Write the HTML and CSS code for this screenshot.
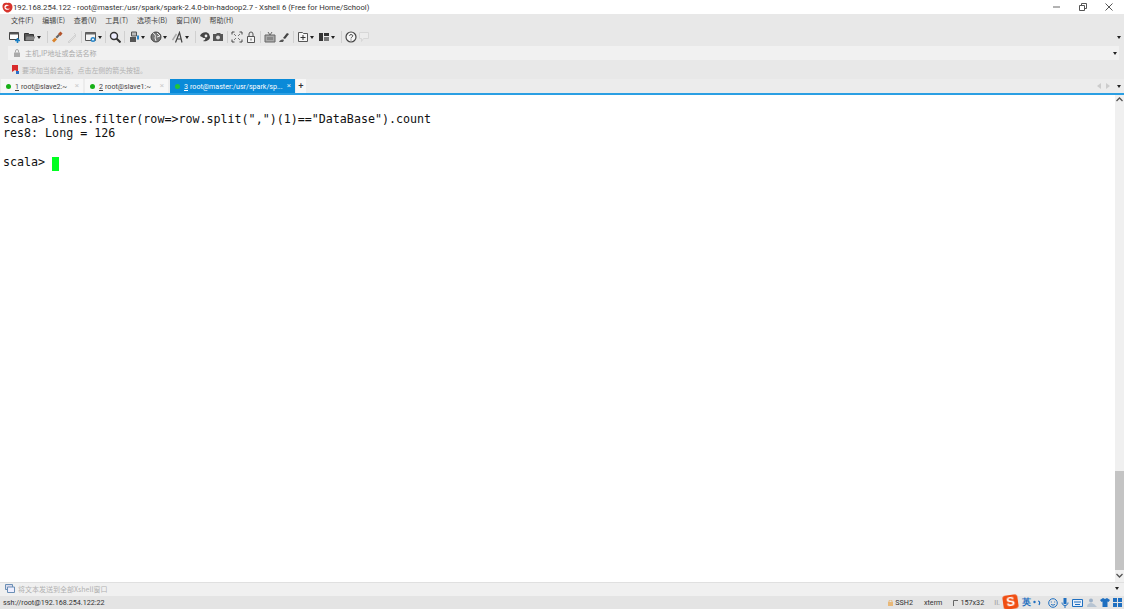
FILE: index.html
```html
<!DOCTYPE html>
<html lang="zh">
<head>
<meta charset="utf-8">
<title>Xshell 6</title>
<link rel="stylesheet" href="styles.css">
</head>
<body>
<div class="app">
  <header class="titlebar">
    <svg class="logo" width="11" height="11" viewBox="0 0 11 11"><path d="M5.500 1C3 0 0 1.500.5 5c.4 3 3 5.500 5 5.500 2.500 0 5-2.500 5-5.500C10.500 2 8 0 5.500 1z" fill="#d8342c"/><path d="M2.500 4c1-1.500 3-1.500 5-.5-1.500 0-3.500.5-4 2 1 1.500 3 1.500 4.500 1-1 1.500-5 2-5.500-.5z" fill="#fff"/></svg>
    <span class="title">192.168.254.122 - root@master:/usr/spark/spark-2.4.0-bin-hadoop2.7 - Xshell 6 (Free for Home/School)</span>
    <div class="winbtns">
      <svg width="8" height="8" viewBox="0 0 8 8"><path d="M0 4h7" stroke="#666" fill="none"/></svg>
      <svg width="8" height="8" viewBox="0 0 8 8"><path d="M.5 2.500h5v5h-5zM2.500 2.500V.5h5v5H5.500" stroke="#555" fill="none"/></svg>
      <svg width="8" height="8" viewBox="0 0 8 8"><path d="M.5.5l7 7M7.500.5l-7 7" stroke="#555" fill="none"/></svg>
    </div>
  </header>
  <nav class="menubar">
    <span>文件(F)</span><span>编辑(E)</span><span>查看(V)</span><span>工具(T)</span><span>选项卡(B)</span><span>窗口(W)</span><span>帮助(H)</span>
  </nav>
  <div class="toolbar">
    <svg class="ic" viewBox="0 0 12 12"><path d="M.5 1.500h9v7h-9z" fill="#fff" stroke="#444"/><path d="M.5 1.500h9v2h-9z" fill="#555"/><path d="M6 9.500h5M8.500 7v5" stroke="#1a7fc4" stroke-width="1.600"/></svg>
    <svg class="ic" viewBox="0 0 12 12"><path d="M.5 2.500h4l1 1h4v6h-9z" fill="#555" stroke="#333"/><path d="M2.500 5.500h9l-2 4h-8z" fill="#888"/></svg>
    <i class="caret"></i>
    <b class="sep wide"></b>
    <svg class="ic" viewBox="0 0 12 12"><path d="M1 9.500l3-3 2 2-3 3z" fill="#d9822b"/><path d="M4.500 6l3-3 1.500 1.500-3 3z" fill="#666"/><path d="M7 3l2.500-2.500 2 2L9.500 5z" fill="#b2532b"/></svg>
    <svg class="ic dim" viewBox="0 0 12 12"><path d="M2 11l7-7 1 1-7 7zM8 2l2 2" stroke="#c9c9c9" fill="#ddd"/></svg>
    <b class="sep"></b>
    <svg class="ic" viewBox="0 0 12 12"><path d="M.5 1.500h10v8h-10z" fill="#f4f4f4" stroke="#555"/><path d="M.5 1.500h10v2h-10z" fill="#666"/><circle cx="8" cy="8.500" r="2.500" fill="#2a86c8"/><circle cx="8" cy="8.500" r="1" fill="#fff"/></svg>
    <i class="caret"></i>
    <b class="sep"></b>
    <svg class="ic" viewBox="0 0 12 12"><circle cx="5" cy="5" r="3.500" fill="#eef" stroke="#333" stroke-width="1.400"/><path d="M7.500 7.500l4 4" stroke="#333" stroke-width="2"/></svg>
    <b class="sep"></b>
    <svg class="ic" viewBox="0 0 12 12"><path d="M3.500 1h5v4h-5z" fill="#bbb" stroke="#555"/><path d="M2 6h6v5H2z" fill="#555"/><path d="M10 4.500v4" stroke="#2a86c8" stroke-width="2"/></svg>
    <i class="caret"></i>
    <svg class="ic m5" viewBox="0 0 12 12"><circle cx="6" cy="6" r="5" fill="#777" stroke="#444"/><path d="M3 2c2 1 3 3 2 5l1 3M7 2l3 3-3 1" stroke="#eee" fill="none"/></svg>
    <i class="caret"></i>
    <svg class="ic m5" viewBox="0 0 12 12"><path d="M.5 9l4-6" stroke="#aaa" stroke-width="1.500"/><path d="M3.500 11.500l4-10 2.500 10M5.500 8h4" stroke="#444" stroke-width="1.200" fill="none"/></svg>
    <i class="caret"></i>
    <b class="sep wide"></b>
    <svg class="ic" viewBox="0 0 12 12"><path d="M1 5c1-4 7-5 9-2l1 3c0 3-4 5-7 4 2-1 3-2 2-3-1 0-2 0-3-1z" fill="#444"/><circle cx="7" cy="5" r="1.400" fill="#eee"/></svg>
    <svg class="ic m1" viewBox="0 0 12 12"><path d="M1 3h3l1-1h3l1 1h2v7H1z" fill="#555"/><circle cx="6" cy="6.500" r="2" fill="#ddd"/></svg>
    <b class="sep"></b>
    <svg class="ic" viewBox="0 0 12 12"><path d="M1 3.500V1h2.500M8.500 1H11v2.500M11 8.500V11H8.500M3.500 11H1V8.500" stroke="#444" fill="none"/><path d="M3 3l2 2M9 3L7 5M9 9L7 7M3 9l2-2" stroke="#777"/></svg>
    <svg class="ic m2" viewBox="0 0 12 12"><path d="M2.500 5.500h7v6h-7z" fill="#f5f5f5" stroke="#555"/><path d="M4 5.500V3a2 2 0 014 0v2.500" stroke="#555" fill="none"/><path d="M6 7.500v2" stroke="#555"/></svg>
    <b class="sep"></b>
    <svg class="ic" viewBox="0 0 12 12"><path d="M1 4h10v7H1z" fill="#aaa" stroke="#666"/><path d="M4 1l2 3 2-3" stroke="#666" fill="none"/><path d="M3 6h6v3H3z" fill="#888"/></svg>
    <svg class="ic m2" viewBox="0 0 12 12"><path d="M5 7l4-5 2 1-4 5z" fill="#444"/><path d="M1 11c1-2 3-3 5-2l-1 2z" fill="#555"/></svg>
    <b class="sep"></b>
    <svg class="ic" viewBox="0 0 12 12"><path d="M1.500 1.500h4l1 1h4v8h-9z" fill="#f5f5f5" stroke="#555"/><path d="M3.500 6.500h5M6 4v5" stroke="#333"/></svg>
    <i class="caret"></i>
    <svg class="ic m4" viewBox="0 0 12 12"><path d="M1 2h4v8H1z" fill="#333"/><path d="M6 2h5v3H6z" fill="#333"/><path d="M6 6h5v4H6z" fill="#777"/></svg>
    <i class="caret"></i>
    <b class="sep wide"></b>
    <svg class="ic" viewBox="0 0 12 12"><circle cx="6" cy="6" r="5" fill="#f7f7f7" stroke="#444" stroke-width="1.200"/><path d="M4.300 4.700C4.500 3.200 7.800 3.200 7.800 4.800 7.800 6 6 6 6 7.400" stroke="#444" fill="none"/><path d="M6 8.500v1" stroke="#444"/></svg>
    <svg class="ic m1 dim" viewBox="0 0 12 12"><path d="M1.500 1.500h9v6h-5l-2 3v-3h-2z" fill="#eee" stroke="#d0d0d0"/></svg>
    <i class="caret end"></i>
  </div>
  <div class="addrbar">
    <div class="addr">
      <svg width="8" height="8" viewBox="0 0 8 8"><path d="M1 3.500h6V8H1z" fill="#aaa"/><path d="M2.500 3.500V2a1.500 1.500 0 013 0v1.500" stroke="#aaa" fill="none"/></svg>
      <span>主机,IP地址或会话名称</span>
      <i class="caret end"></i>
    </div>
  </div>
  <div class="linkbar">
    <svg width="9" height="10" viewBox="0 0 9 10"><path d="M1 0h6v7L4 5 1 7z" fill="#d82a2a"/><path d="M5 6h3v3H5z" fill="#2a6fc8"/></svg>
    <span>要添加当前会话，点击左侧的箭头按钮。</span>
  </div>
  <div class="tabbar">
    <div class="tab t1"><i class="dot"></i><u>1</u> root@slave2:~<em>×</em></div>
    <div class="tab t2"><i class="dot"></i><u>2</u> root@slave1:~<em>×</em></div>
    <div class="tab active"><i class="dot"></i><u>3</u> root@master:/usr/spark/sp...<em>×</em></div>
    <div class="plus">+</div>
    <div class="tabnav">
      <svg width="4" height="6" viewBox="0 0 4 6"><path d="M4 0v6L0 3z" fill="#ccc"/></svg>
      <svg width="4" height="6" viewBox="0 0 4 6"><path d="M0 0v6l4-3z" fill="#ccc"/></svg>
      <i class="caret"></i>
    </div>
  </div>
  <main class="main">
    <pre class="term">
scala&gt; lines.filter(row=&gt;row.split(",")(1)=="DataBase").count
res8: Long = 126

scala&gt; <span class="cursor"> </span></pre>
    <div class="scroll">
      <svg class="arr" width="7" height="5" viewBox="0 0 7 5"><path d="M.5 4l3-3 3 3" stroke="#555" fill="none" stroke-width="1.300"/></svg>
      <div class="track"><div class="thumb"></div></div>
      <svg class="arr" width="7" height="5" viewBox="0 0 7 5"><path d="M.5 1l3 3 3-3" stroke="#555" fill="none" stroke-width="1.300"/></svg>
    </div>
  </main>
  <div class="compose">
    <svg width="10" height="9" viewBox="0 0 10 9"><path d="M.5 .5h7v5h-7z" fill="#dde" stroke="#6a8fb5"/><path d="M2.500 3h7v5.500h-7z" fill="#eef" stroke="#6a8fb5"/></svg>
    <span>将文本发送到全部Xshell窗口</span>
    <i class="caret end"></i>
  </div>
  <footer class="status">
    <span class="conn">ssh://root@192.168.254.122:22</span>
    <span class="st ssh"><svg width="5" height="6" viewBox="0 0 5 6"><path d="M0 2h5v4H0z" fill="#e8b878"/><path d="M1 2V1a1.500 1 0 013 0v1" stroke="#e8b878" fill="none"/></svg>SSH2</span>
    <span class="st term-type">xterm</span>
    <span class="st size"><svg width="5" height="6" viewBox="0 0 5 6"><path d="M.5 6V.5H5" stroke="#666" fill="none"/></svg>157x32</span>
    <span class="st cap">II.</span>
    <div class="ime">
      <span class="sogou">S</span>
      <span class="ying">英</span>
      <svg class="g-dot" width="8" height="8" viewBox="0 0 8 8"><circle cx="1.500" cy="3" r="1.200" fill="#1f6fc0"/><path d="M5 2c2 0 2 2 1 4" stroke="#1f6fc0" stroke-width="1.200" fill="none"/></svg>
      <svg class="g-smile" width="10" height="10" viewBox="0 0 10 10"><circle cx="5" cy="5" r="4.300" fill="none" stroke="#1f6fc0"/><path d="M3 6.200c1 1.200 3 1.200 4 0M3.300 3.500v1M6.700 3.500v1" stroke="#1f6fc0" fill="none"/></svg>
      <svg width="8" height="10" viewBox="0 0 8 10"><path d="M2.500 0h3v6h-3z" fill="#1f6fc0"/><path d="M1 4.500c0 4 6 4 6 0M4 8v2" stroke="#1f6fc0" fill="none"/></svg>
      <svg width="11" height="8" viewBox="0 0 11 8"><path d="M.5.5h10v7H.5z" fill="#e8f0fa" stroke="#1f6fc0"/><path d="M2 3h7M3 5.500h5" stroke="#1f6fc0"/></svg>
      <svg width="11" height="10" viewBox="0 0 11 10"><circle cx="5" cy="2.500" r="2" fill="#9bb0c8"/><path d="M1 9c0-3 2-4 4-4s3 1 4 2l2 2z" fill="#b7c4d2"/></svg>
      <svg width="10" height="9" viewBox="0 0 10 9"><path d="M3 0L0 2l1.500 2L2.500 3.500V9h5V3.500L8.500 4 10 2 7 0 5 1z" fill="#1f6fc0"/></svg>
      <svg width="9" height="9" viewBox="0 0 9 9"><path d="M0 0h4v4H0zM5 0h4v4H5zM0 5h4v4H0zM5 5h4v4H5z" fill="#1f6fc0"/></svg>
    </div>
  </footer>
</div>
</body>
</html>
```
FILE: styles.css
```css
* { box-sizing: border-box; }
html, body { margin: 0; height: 100%; overflow: hidden; }
body { font-family: "Noto Sans CJK SC", "Liberation Sans", sans-serif; font-size: 8px; color: #333; background: #fff; }
.app { display: flex; flex-direction: column; width: 1124px; height: 609px; filter: blur(.3px); }

.titlebar { display: flex; align-items: center; height: 14px; flex: none; background: #fff; padding-left: 2px; }
.logo { flex: none; margin-right: 0; }
.title { font-family: Roboto, "Noto Sans", sans-serif; font-size: 7.720px; color: #333; white-space: nowrap; }
.winbtns { margin-left: auto; display: flex; gap: 18px; align-items: center; padding-right: 11px; }

.menubar { display: flex; align-items: center; height: 12px; flex: none; background: #e8e8e8; padding-left: 11px; gap: 8.700px; font-size: 7px; color: #444; }

.toolbar { display: flex; align-items: center; height: 20px; flex: none; background: #e8e8e8; padding: 2px 0 0 9px; }
.ic { width: 12px; height: 12px; flex: none; }
.ic + .ic { margin-left: 3px; }
.ic.m1 { margin-left: 1px; }
.ic.m2 { margin-left: 2px; }
.ic.m4 { margin-left: 4px; }
.ic.m5 { margin-left: 5px; }
.dim { opacity: .7; }
.caret { display: block; width: 0; height: 0; flex: none; margin-left: 1px; border-left: 2.500px solid transparent; border-right: 2.500px solid transparent; border-top: 3px solid #222; }
.caret.end { margin-left: auto; margin-right: 3px; }
.sep { display: block; width: 1px; height: 12px; background: #d0d0d0; flex: none; margin: 0 3px; }
.sep.wide { margin-left: 6px; }

.addrbar { height: 14px; flex: none; background: #e8e8e8; padding: 0 5px 0 8px; }
.addr { height: 100%; background: #f1f1f1; display: flex; align-items: center; padding-left: 5px; gap: 4px; color: #aaa; font-size: 7px; }
.addr .caret.end { margin-right: 2px; }

.linkbar { height: 19px; flex: none; background: #e8e8e8; display: flex; align-items: center; padding-left: 11px; gap: 2px; color: #b0b0b0; font-size: 6.950px; }

.tabbar { height: 16px; flex: none; background: #ececec; border-bottom: 2px solid #2b9fe3; display: flex; padding-left: 1px; gap: 2px; font-family: Roboto, "Noto Sans", sans-serif; font-size: 7.100px; color: #444; }
.tab { display: flex; align-items: center; height: 14px; padding: 1px 0 0 5px; background: #f7f7f7; position: relative; white-space: nowrap; }
.t1 { width: 82px; }
.t2 { width: 83px; }
.tab u { margin-right: 2px; }
.tab em { position: absolute; right: 4px; top: 2px; font-style: normal; color: #ccc; font-size: 8px; }
.dot { width: 5px; height: 5px; border-radius: 50%; background: #17b017; margin-right: 4px; flex: none; }
.active { width: 125px; background: #0a8ad8; color: #fff; }
.active .dot { background: #21c43a; }
.active em { color: #cfe8f8; }
.plus { width: 10px; height: 14px; margin-left: -1px; background: #f7f7f7; text-align: center; font: bold 9px/15px "Liberation Sans", sans-serif; color: #333; }
.tabnav { margin-left: auto; display: flex; align-items: center; gap: 5px; height: 14px; padding-right: 3px; }
.tabnav .caret { margin-left: 2px; }

.main { flex: 1; min-height: 0; display: flex; background: #fff; }
.term { flex: 1; margin: 0; padding: 16.500px 0 0 3px; font-family: "DejaVu Sans Mono", monospace; font-size: 11.670px; line-height: 14.600px; color: #111; }
.cursor { display: inline-block; width: 7px; height: 14px; background: #00ff21; vertical-align: -2px; }
.scroll { width: 9px; flex: none; background: #f0f0f0; display: flex; flex-direction: column; align-items: center; padding: 2px 0 4px; }
.arr { flex: none; }
.track { flex: 1; width: 100%; display: flex; flex-direction: column; justify-content: flex-end; padding-bottom: 3px; }
.thumb { height: 99px; background: #c4c4c4; }

.compose { height: 14px; flex: none; background: #f0f0f0; border-top: 1px solid #e0e0e0; display: flex; align-items: center; padding: 0 0 2px 5px; gap: 3px; color: #b0b0b0; font-size: 7px; }
.compose .caret.end { margin-right: 5px; }

.status { height: 13px; flex: none; background: #e4e4e4; display: flex; align-items: center; padding-left: 3px; font-family: Roboto, "Noto Sans", sans-serif; font-size: 7.200px; color: #333; white-space: nowrap; }
.conn { margin-right: auto; }
.st { display: flex; align-items: center; gap: 2px; }
.ssh { margin-right: 11px; }
.term-type { margin-right: 11px; }
.size { margin-right: 10px; gap: 2px; }
.cap { color: #999; margin-right: 3px; }
.ime { display: flex; align-items: center; gap: 3px; padding-right: 2px; }
.sogou { width: 15px; height: 14px; margin-top: -1px; margin-right: 1px; background: #f04e12; color: #fff; font: bold 13px/14px "Liberation Sans", sans-serif; text-align: center; border-radius: 3px; transform: rotate(-8deg); }
.ying { color: #1f6fc0; font-size: 9px; font-weight: 700; }
.g-dot { margin-left: -1px; }
.g-smile { margin-left: 4px; }
```
